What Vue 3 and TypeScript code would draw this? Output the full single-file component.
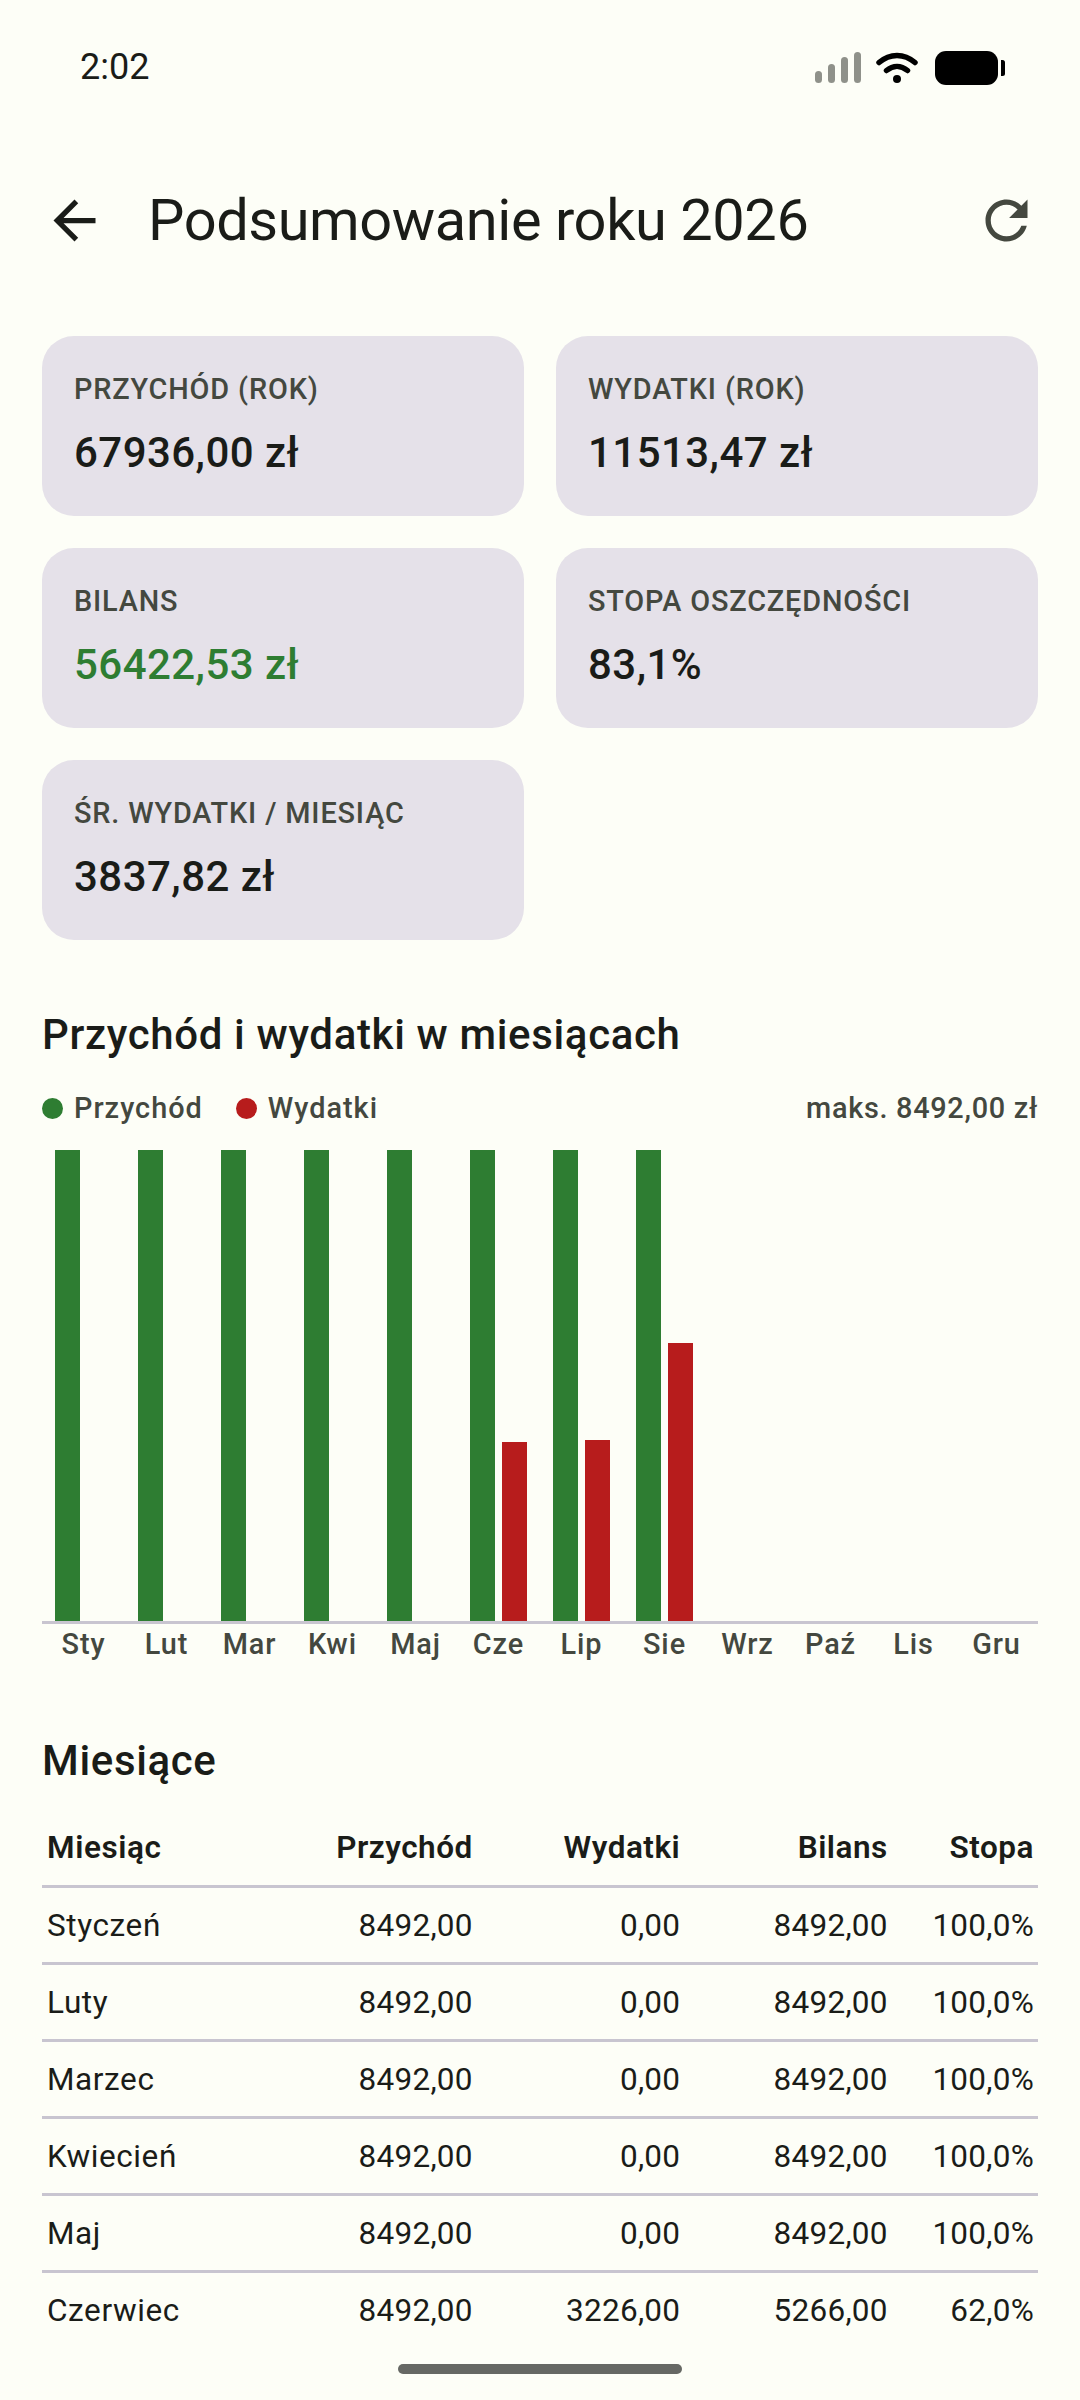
<script setup lang="ts">
interface Month {
  short: string
  name: string
  income: number
  expense: number
}

const maxValue = 8492

const months: Month[] = [
  { short: 'Sty', name: 'Styczeń', income: 8492, expense: 0 },
  { short: 'Lut', name: 'Luty', income: 8492, expense: 0 },
  { short: 'Mar', name: 'Marzec', income: 8492, expense: 0 },
  { short: 'Kwi', name: 'Kwiecień', income: 8492, expense: 0 },
  { short: 'Maj', name: 'Maj', income: 8492, expense: 0 },
  { short: 'Cze', name: 'Czerwiec', income: 8492, expense: 3226 },
  { short: 'Lip', name: 'Lipiec', income: 8492, expense: 3268 },
  { short: 'Sie', name: 'Sierpień', income: 8492, expense: 5019 },
  { short: 'Wrz', name: 'Wrzesień', income: 0, expense: 0 },
  { short: 'Paź', name: 'Październik', income: 0, expense: 0 },
  { short: 'Lis', name: 'Listopad', income: 0, expense: 0 },
  { short: 'Gru', name: 'Grudzień', income: 0, expense: 0 },
]

const cards = [
  { label: 'PRZYCHÓD (ROK)', value: '67936,00 zł' },
  { label: 'WYDATKI (ROK)', value: '11513,47 zł' },
  { label: 'BILANS', value: '56422,53 zł', positive: true },
  { label: 'STOPA OSZCZĘDNOŚCI', value: '83,1%' },
  { label: 'ŚR. WYDATKI / MIESIĄC', value: '3837,82 zł' },
]

const rows = months.slice(0, 6)

function money(v: number) {
  return v.toFixed(2).replace('.', ',')
}

function rate(m: Month) {
  return (((m.income - m.expense) / m.income) * 100).toFixed(1).replace('.', ',') + '%'
}

function barHeight(v: number) {
  return `${(v / maxValue) * 100}%`
}
</script>

<template>
  <div class="screen">
    <div class="status-bar">
      <span class="time">2:02</span>
      <svg class="status-icons" width="190" height="34" viewBox="0 0 190 34">
        <g fill="#8f918a">
          <rect x="0" y="20" width="7" height="12" rx="3.5" />
          <rect x="13" y="13" width="7" height="19" rx="3.5" />
          <rect x="26" y="6" width="7" height="26" rx="3.5" />
          <rect x="39" y="1" width="7" height="31" rx="3.5" />
        </g>
        <g fill="none" stroke="#000" stroke-width="5.5" stroke-linecap="round">
          <path d="M64 11.5C75 2 89 2 100 11.5" />
          <path d="M71.5 19.5C78 14 86 14 92.5 19.5" />
        </g>
        <circle cx="82" cy="28" r="4" fill="#000" />
        <rect x="120" y="0" width="63" height="34" rx="11" fill="#000" />
        <path d="M186 9h1.5a2.5 2.5 0 0 1 2.5 2.5v11a2.5 2.5 0 0 1-2.5 2.5H186z" fill="#000" />
      </svg>
    </div>

    <header class="top-bar">
      <svg class="icon" width="63" height="63" viewBox="0 0 24 24">
        <path fill="#1a1c18" d="M20 11H7.83l5.59-5.59L12 4l-8 8 8 8 1.41-1.41L7.83 13H20v-2z" />
      </svg>
      <h1 class="title">Podsumowanie roku 2026</h1>
      <svg class="icon refresh" width="63" height="63" viewBox="0 0 24 24">
        <path fill="#44483f" d="M17.65 6.35C16.2 4.9 14.21 4 12 4c-4.42 0-7.99 3.58-7.99 8s3.57 8 7.99 8c3.73 0 6.84-2.55 7.73-6h-2.08c-.82 2.33-3.04 4-5.65 4-3.31 0-6-2.69-6-6s2.69-6 6-6c1.66 0 3.14.69 4.22 1.78L13 11h7V4l-2.35 2.35z" />
      </svg>
    </header>

    <main class="content">
      <section class="cards">
        <div v-for="card in cards" :key="card.label" class="card">
          <div class="card-label">{{ card.label }}</div>
          <div class="card-value" :class="{ positive: card.positive }">{{ card.value }}</div>
        </div>
      </section>

      <h2 class="section-title chart-title">Przychód i wydatki w miesiącach</h2>
      <div class="legend">
        <span class="dot green"></span>
        <span>Przychód</span>
        <span class="dot red"></span>
        <span>Wydatki</span>
        <span class="legend-max">maks. 8492,00 zł</span>
      </div>

      <div class="chart">
        <div v-for="m in months" :key="m.short" class="chart-col">
          <div class="bar green" :style="{ height: barHeight(m.income) }"></div>
          <div class="bar red" :style="{ height: barHeight(m.expense) }"></div>
        </div>
      </div>
      <div class="chart-labels">
        <span v-for="m in months" :key="m.short">{{ m.short }}</span>
      </div>

      <h2 class="section-title table-title">Miesiące</h2>
      <div class="table">
        <div class="row head">
          <span>Miesiąc</span>
          <span>Przychód</span>
          <span>Wydatki</span>
          <span>Bilans</span>
          <span>Stopa</span>
        </div>
        <div v-for="m in rows" :key="m.name" class="row">
          <span>{{ m.name }}</span>
          <span>{{ money(m.income) }}</span>
          <span>{{ money(m.expense) }}</span>
          <span>{{ money(m.income - m.expense) }}</span>
          <span>{{ rate(m) }}</span>
        </div>
      </div>
    </main>

    <div class="nav-area">
      <div class="home-bar"></div>
    </div>
  </div>
</template>

<style scoped>
.screen {
  width: 1080px;
  height: 2400px;
  display: flex;
  flex-direction: column;
  overflow: hidden;
  background: #fdfef7;
  color: #1a1c18;
  font-family: Roboto, "Liberation Sans", sans-serif;
}

.status-bar {
  height: 136px;
  flex-shrink: 0;
  display: flex;
  justify-content: space-between;
  align-items: flex-start;
  padding: 0 75px 0 80px;
  box-sizing: border-box;
}

.time {
  margin-top: 45px;
  font-size: 36px;
  line-height: 44px;
  color: #1a1c18;
}

.status-icons {
  margin-top: 51px;
}

.top-bar {
  height: 168px;
  flex-shrink: 0;
  display: flex;
  align-items: center;
  padding-left: 43px;
  padding-right: 42px;
  box-sizing: border-box;
}

.icon {
  flex-shrink: 0;
}

.title {
  flex: 1;
  margin: 0 0 0 42px;
  font-size: 57.75px;
  line-height: 74px;
  font-weight: 400;
  letter-spacing: -0.42px;
}

.content {
  flex: 1;
  min-height: 0;
  overflow: hidden;
  padding: 32px 42px 0;
}

.cards {
  display: grid;
  grid-template-columns: 1fr 1fr;
  gap: 32px;
}

.card {
  height: 180px;
  box-sizing: border-box;
  padding: 32px 32px 0;
  background: #e5e1e9;
  border-radius: 32px;
}

.card-label {
  font-size: 28.875px;
  line-height: 42px;
  font-weight: 500;
  letter-spacing: 0.85px;
  color: #44483f;
}

.card-value {
  margin-top: 16px;
  font-size: 42px;
  line-height: 54px;
  font-weight: 500;
  letter-spacing: 0.45px;
  color: #1a1c18;
}

.card-value.positive {
  color: #2e7d32;
}

.section-title {
  margin: 0;
  font-size: 42px;
  line-height: 54px;
  font-weight: 500;
  letter-spacing: 0.65px;
}

.chart-title {
  margin-top: 68px;
}

.legend {
  margin-top: 25px;
  height: 42px;
  display: flex;
  align-items: center;
  font-size: 28.875px;
  font-weight: 500;
  letter-spacing: 1px;
  color: #44483f;
}

.dot {
  width: 21px;
  height: 21px;
  border-radius: 50%;
  margin-right: 11px;
}

.dot.red {
  margin-left: 33px;
}

.green {
  background: #2e7d32;
}

.red {
  background: #b71c1c;
}

.legend-max {
  margin-left: auto;
  letter-spacing: 0.7px;
}

.chart {
  margin-top: 21px;
  height: 471px;
  display: grid;
  grid-template-columns: repeat(12, 1fr);
  border-bottom: 3px solid #c8c5d0;
}

.chart-col {
  display: flex;
  justify-content: center;
  align-items: flex-end;
  gap: 7px;
}

.bar {
  width: 25px;
}

.chart-labels {
  margin-top: 2px;
  display: grid;
  grid-template-columns: repeat(12, 1fr);
  text-align: center;
  font-size: 28.875px;
  line-height: 36px;
  font-weight: 500;
  letter-spacing: 0.9px;
  color: #44483f;
}

.table-title {
  margin-top: 72px;
}

.table {
  margin-top: 21px;
}

.row {
  display: grid;
  grid-template-columns: 1.1fr 1fr 1fr 1fr 0.7fr;
  height: 77px;
  box-sizing: border-box;
  align-items: center;
  border-top: 3px solid #c8c5d0;
  font-size: 31.5px;
  letter-spacing: 0.25px;
}

.row span {
  padding: 0 5px;
  text-align: right;
}

.row span:last-child {
  padding-right: 4px;
}

.row span:first-child {
  text-align: left;
  letter-spacing: 0.6px;
}

.row.head {
  border-top: none;
  height: 76px;
  font-weight: 600;
  letter-spacing: 0.5px;
}

.nav-area {
  height: 60px;
  flex-shrink: 0;
  display: flex;
  justify-content: center;
  padding-top: 24px;
  box-sizing: border-box;
}

.home-bar {
  width: 284px;
  height: 10px;
  border-radius: 5px;
  background: #666864;
}
</style>

<style>
html,
body {
  background: #fdfef7;
}
</style>
